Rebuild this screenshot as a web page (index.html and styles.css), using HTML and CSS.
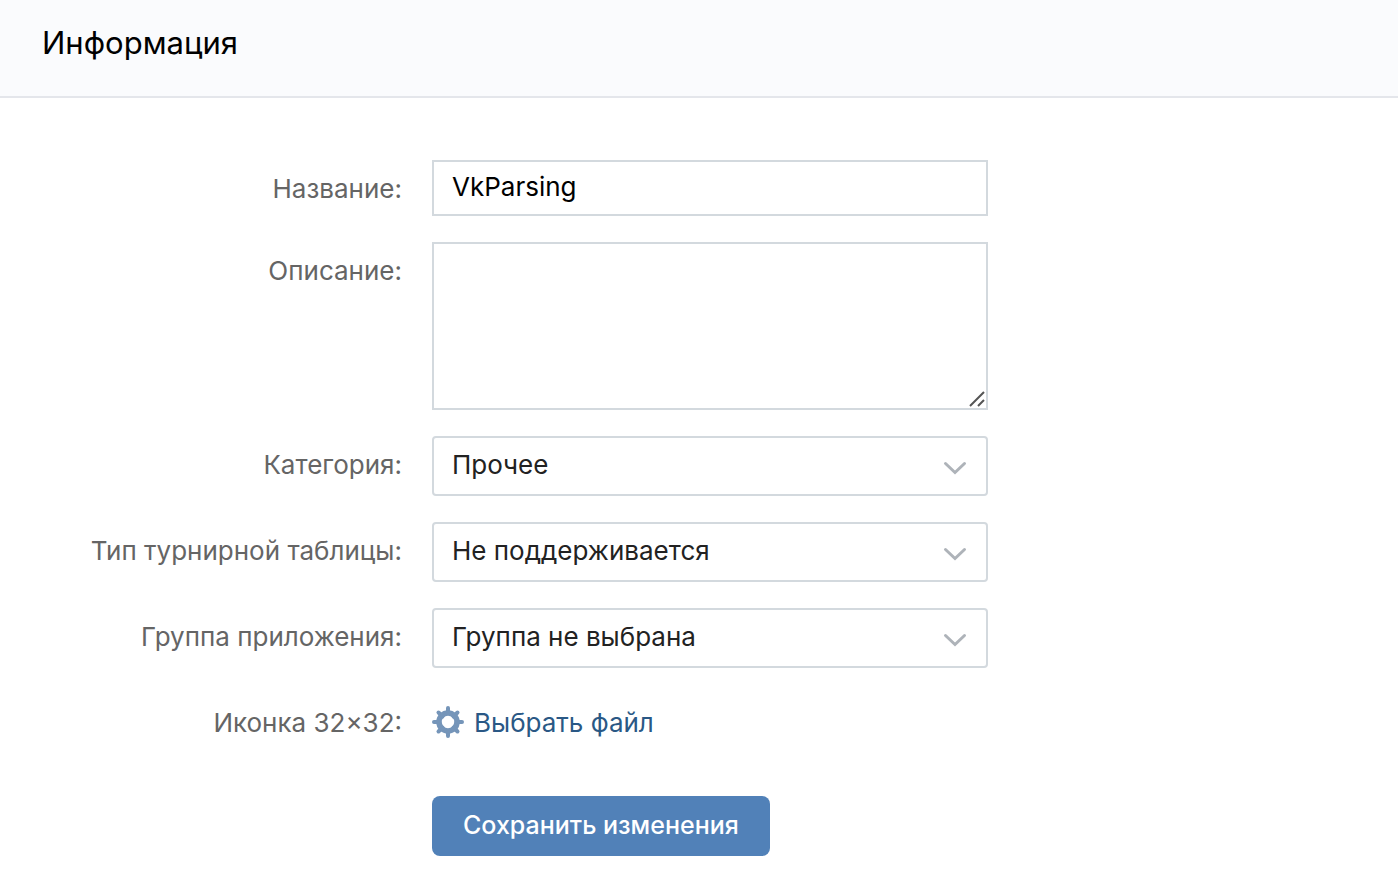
FILE: index.html
```html
<!DOCTYPE html>
<html lang="ru">
<head>
<meta charset="utf-8">
<meta name="viewport" content="width=device-width, initial-scale=1">
<title>Информация</title>
<link rel="stylesheet" href="styles.css">
</head>
<body>
<header class="page-header">
  <h1 class="page-title">Информация</h1>
</header>
<main>
  <form class="form">
    <div class="row">
      <label class="label" for="name">Название:</label>
      <input class="field text-input" id="name" type="text" value="VkParsing">
    </div>
    <div class="row">
      <label class="label" for="description">Описание:</label>
      <div class="textarea-wrap">
        <textarea class="field textarea" id="description"></textarea>
        <svg class="grip" viewBox="0 0 16 16" aria-hidden="true"><path d="M1 15 15 1M9 15l6-6"/></svg>
      </div>
    </div>
    <div class="row">
      <label class="label" for="category">Категория:</label>
      <div class="select-wrap">
        <select class="field select" id="category"><option>Прочее</option></select>
        <svg class="chevron" viewBox="0 0 24 14" aria-hidden="true"><path d="M2.5 2.5l9.5 9 9.5-9"/></svg>
      </div>
    </div>
    <div class="row">
      <label class="label" for="table-type">Тип турнирной таблицы:</label>
      <div class="select-wrap">
        <select class="field select" id="table-type"><option>Не поддерживается</option></select>
        <svg class="chevron" viewBox="0 0 24 14" aria-hidden="true"><path d="M2.5 2.5l9.5 9 9.5-9"/></svg>
      </div>
    </div>
    <div class="row">
      <label class="label" for="group">Группа приложения:</label>
      <div class="select-wrap">
        <select class="field select" id="group"><option>Группа не выбрана</option></select>
        <svg class="chevron" viewBox="0 0 24 14" aria-hidden="true"><path d="M2.5 2.5l9.5 9 9.5-9"/></svg>
      </div>
    </div>
    <div class="row">
      <span class="label" id="icon-label">Иконка 32×32:</span>
      <a class="file-link" id="icon-file" href="#" aria-labelledby="icon-label icon-file">
        <svg class="gear" viewBox="0 0 32 32" aria-hidden="true">
          <path class="gear-teeth" d="M16 2v5M16 25v5M2 16h5M25 16h5M6.5 6.5l4 4M21.500 21.500l4 4M25.500 6.500l-4 4M10.500 21.500l-4 4"/>
          <circle class="gear-ring" cx="16" cy="16" r="9"/>
        </svg>
        <span>Выбрать файл</span>
      </a>
    </div>
    <div class="row actions">
      <button class="submit" type="submit">Сохранить изменения</button>
    </div>
  </form>
</main>
</body>
</html>
```
FILE: styles.css
```css
* {
  box-sizing: border-box;
}

body {
  margin: 0;
  background: #fff;
  color: #000;
  font: 26px/32px Inter, "Open Sans", sans-serif;
}

.page-header {
  padding: 22px 42px 32px;
  background: #fafbfd;
  border-bottom: 2px solid #e4e6eb;
}

.page-title {
  margin: 0;
  font-size: 31px;
  font-weight: 400;
  line-height: 42px;
}

.form {
  display: grid;
  gap: 26px;
  padding: 62px 0 34px;
}

.row {
  display: grid;
  grid-template-columns: 402px minmax(0, 556px);
  column-gap: 30px;
  align-items: start;
}

.label {
  padding-top: 13px;
  color: #656565;
  text-align: right;
}

.field {
  display: block;
  width: 100%;
  margin: 0;
  padding: 9px 18px 11px;
  background: #fff;
  border: 2px solid #d3d9de;
  border-radius: 0;
  color: #000;
  font: inherit;
  outline: none;
}

.textarea-wrap,
.select-wrap {
  position: relative;
}

.textarea {
  height: 168px;
  resize: vertical;
}

.textarea::-webkit-resizer {
  background: transparent;
}

.grip {
  position: absolute;
  right: 3px;
  bottom: 3px;
  width: 16px;
  height: 16px;
  fill: none;
  stroke: #555;
  stroke-width: 2;
  pointer-events: none;
}

.select {
  height: 60px;
  padding: 10px 60px 12px 18px;
  border-radius: 4px;
  color: #222;
  appearance: none;
}

.chevron {
  position: absolute;
  top: 25px;
  right: 21px;
  width: 24px;
  height: 14px;
  fill: none;
  stroke: #aeb3b9;
  stroke-width: 3;
  stroke-linecap: round;
  pointer-events: none;
}

.file-link {
  display: flex;
  align-items: flex-start;
  gap: 10px;
  padding: 12px 0 15px;
  color: #2a5885;
  text-decoration: none;
}

.file-link span {
  padding-top: 1px;
}

.gear {
  width: 32px;
  height: 32px;
  fill: none;
  stroke: #7595b9;
}

.gear-teeth {
  stroke-width: 4;
  stroke-linecap: round;
}

.gear-ring {
  stroke-width: 5.6;
}

.actions {
  padding-top: 16px;
}

.submit {
  grid-column: 2;
  justify-self: start;
  padding: 13px 31px 15px;
  background: #5181b8;
  border: 0;
  border-radius: 8px;
  color: #fff;
  font: inherit;
  font-size: 25px;
  font-weight: 500;
}
```
